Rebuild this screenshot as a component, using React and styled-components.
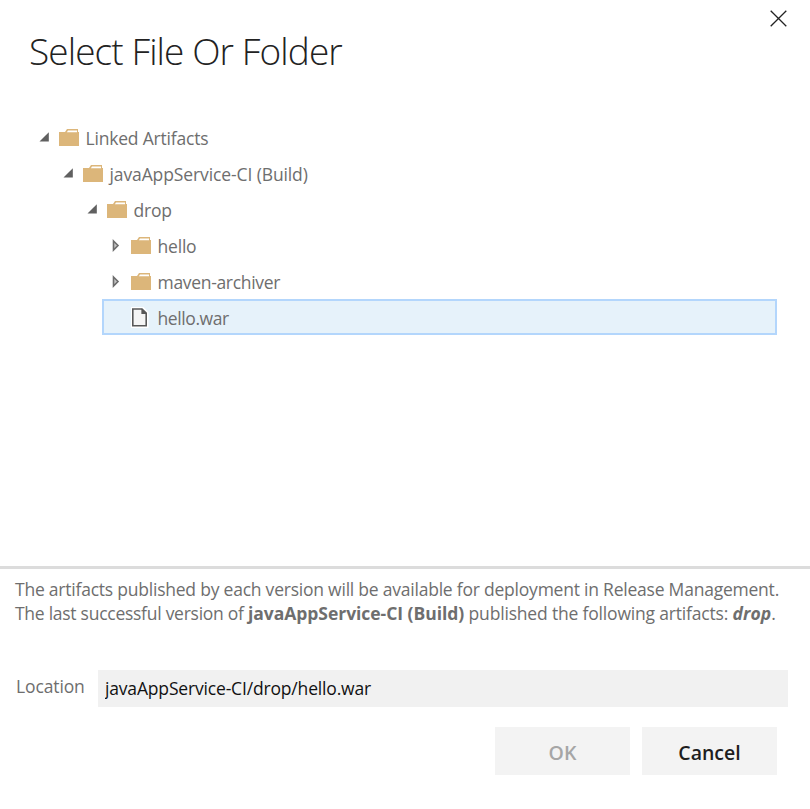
import React from 'react';
import styled, { createGlobalStyle } from 'styled-components';

const GlobalStyle = createGlobalStyle`
  *, *::before, *::after { box-sizing: border-box; }
  body {
    margin: 0;
    background: #fff;
    font-family: "Open Sans", "Noto Sans", sans-serif;
    font-size: 17.5px;
    color: #6e6e6e;
  }
`;

const Dialog = styled.div`
  display: flex;
  flex-direction: column;
  height: 809px;
  overflow: hidden;
`;

const Header = styled.header`
  display: flex;
  justify-content: space-between;
  align-items: flex-start;
  height: 119px;
  padding: 10px 23px 0 29px;
`;

const Title = styled.h1`
  margin: 16px 0 0;
  font-size: 37px;
  font-weight: 300;
  line-height: 50px;
  letter-spacing: -0.9px;
  color: #222;
  white-space: nowrap;
`;

const CloseButton = styled.button`
  display: flex;
  padding: 0;
  border: 0;
  background: none;
`;

const Tree = styled.ul`
  flex: none;
  height: 447px;
  margin: 0;
  padding: 0 33px 0 30px;
  list-style: none;
`;

const Row = styled.li`
  display: flex;
  align-items: center;
  height: 36px;
  margin-left: ${(p) => p.$level * 24}px;
  background: ${(p) => (p.$selected ? '#e6f2fa' : 'transparent')};
  box-shadow: ${(p) => (p.$selected ? 'inset 0 0 0 2px #b3d6fc' : 'none')};
`;

const Toggle = styled.span`
  display: flex;
  width: 29px;
  padding-left: 9px;
`;

const IconSlot = styled.span`
  display: flex;
  width: 26.5px;
`;

const Label = styled.span`
  padding-top: 2px;
  line-height: 34px;
  letter-spacing: ${(p) => p.$tracking}px;
  white-space: nowrap;
`;

const Footer = styled.footer`
  border-top: 3px solid #dcdcdc;
`;

const Summary = styled.p`
  margin: 0;
  padding: 8px 0 0 15px;
  line-height: 24px;
  white-space: nowrap;
`;

const Run = styled.span`
  letter-spacing: ${(p) => p.$tracking}px;
  font-weight: ${(p) => (p.$bold ? 700 : 400)};
  font-style: ${(p) => (p.$italic ? 'italic' : 'normal')};
`;

const Field = styled.label`
  display: flex;
  margin-top: 45px;
  padding: 0 22px 0 16px;
`;

const FieldName = styled.span`
  width: 82px;
  line-height: 32px;
  letter-spacing: -0.12px;
`;

const Input = styled.input`
  flex: 1;
  height: 37px;
  padding: 0 7px 2px;
  border: 0;
  outline: 0;
  background: #f1f1f1;
  color: #111;
  font: inherit;
  letter-spacing: -0.17px;
`;

const Actions = styled.div`
  display: flex;
  justify-content: flex-end;
  gap: 12px;
  padding: 20px 33px 0 0;
`;

const Button = styled.button`
  width: 135px;
  height: 48px;
  padding: 3px 0 0;
  border: 0;
  background: #f3f3f3;
  color: ${(p) => (p.disabled ? '#a6a6a6' : '#1e1e1e')};
  font: 600 19.5px "Open Sans", sans-serif;
`;

const CloseIcon = () => (
  <svg width="17" height="17" viewBox="0 0 17 17">
    <path d="M.7.7 16.3 16.3M16.3.7.7 16.3" stroke="#222" strokeWidth="1.3" fill="none" />
  </svg>
);

const Expanded = () => (
  <svg width="12" height="12" viewBox="0 0 12 12">
    <path d="M.5 10.5 9.8 1.2V10.5Z" fill="#606060" />
  </svg>
);

const Collapsed = () => (
  <svg width="12" height="14" viewBox="0 0 12 14">
    <path d="M2.5 3 7 7.5 2.5 12Z" fill="#c4c4c4" stroke="#6c6c6c" strokeWidth="1.6" />
  </svg>
);

const FolderIcon = () => (
  <svg width="20" height="18" viewBox="0 0 20 18">
    <path d="M0 4H6L8 1H19V4H20V18H0Z" fill="#dcb67a" />
    <path d="M7.8 4.2 9 2.4H18V4.2Z" fill="#fff" />
  </svg>
);

const FileIcon = () => (
  <svg width="18" height="22" viewBox="0 0 18 22">
    <path d="M0 1H12.5L17.5 6V22H0Z" fill="#fff" />
    <path d="M1.8 3H11L15.2 7.2V19.7H1.8Z" fill="#f5f5f5" stroke="#585858" strokeWidth="1.6" />
    <path d="M10.4 2.6V8H15.8Z" fill="#585858" />
  </svg>
);

const nodes = [
  { name: 'Linked Artifacts', level: 0, open: true, tracking: -0.19 },
  { name: 'javaAppService-CI (Build)', level: 1, open: true, tracking: -0.11 },
  { name: 'drop', level: 2, open: true, tracking: -0.2 },
  { name: 'hello', level: 3, open: false, tracking: -0.2 },
  { name: 'maven-archiver', level: 3, open: false, tracking: -0.32 },
  { name: 'hello.war', level: 3, file: true, tracking: -0.4 },
];

export default function App() {
  return (
    <>
      <GlobalStyle />
      <Dialog>
        <Header>
          <Title>Select File Or Folder</Title>
          <CloseButton aria-label="Close"><CloseIcon /></CloseButton>
        </Header>
        <Tree>
          {nodes.map((n) => (
            <Row key={n.name} $level={n.level} $selected={n.file}>
              <Toggle>{!n.file && (n.open ? <Expanded /> : <Collapsed />)}</Toggle>
              <IconSlot>{n.file ? <FileIcon /> : <FolderIcon />}</IconSlot>
              <Label $tracking={n.tracking}>{n.name}</Label>
            </Row>
          ))}
        </Tree>
        <Footer>
          <Summary>
            <Run $tracking={-0.223}>
              The artifacts published by each version will be available for deployment in Release Management.
            </Run>
            <br />
            <Run $tracking={-0.265}>The last successful version of </Run>
            <Run $bold $tracking={-0.04}>javaAppService-CI (Build)</Run>
            <Run $tracking={-0.18}> published the following artifacts: </Run>
            <Run $bold $italic $tracking={0.1}>drop</Run>
            <Run $tracking={0}>.</Run>
          </Summary>
          <Field>
            <FieldName>Location</FieldName>
            <Input readOnly value="javaAppService-CI/drop/hello.war" />
          </Field>
          <Actions>
            <Button disabled>OK</Button>
            <Button>Cancel</Button>
          </Actions>
        </Footer>
      </Dialog>
    </>
  );
}
